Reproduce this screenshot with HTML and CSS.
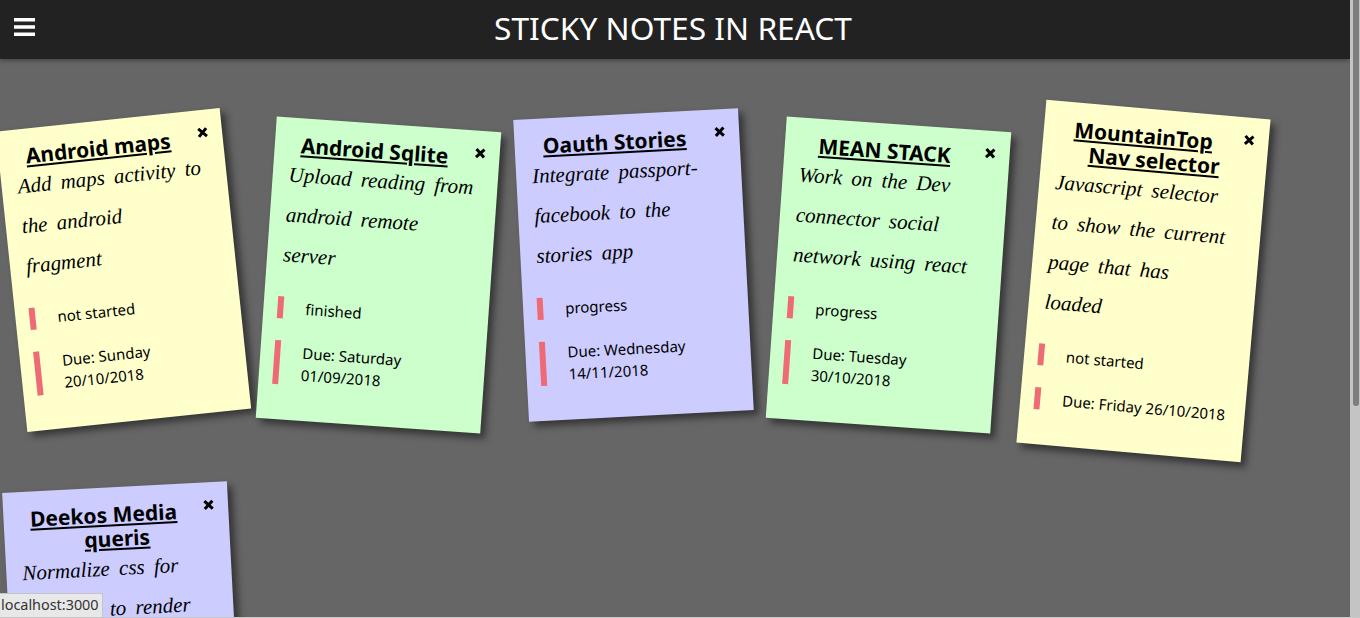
FILE: index.html
```html
<!DOCTYPE html>
<html lang="en">
<head>
    <meta charset="UTF-8">
    <title>Sticky Notes in React</title>
    <link rel="stylesheet" href="styles.css">
</head>
<body>
    <div class="page">
        <header class="topbar">
            <button class="menu" aria-label="Menu">
                <svg width="21" height="18" viewBox="0 0 21 18"><path d="M0 0h21v3.500H0zM0 7.200h21v3.500H0zM0 14.500h21V18H0z" fill="#fff"/></svg>
            </button>
            <h1>STICKY NOTES IN REACT</h1>
        </header>

        <ul class="notes">
            <li class="note yellow">
                <svg class="close" width="11" height="11" viewBox="0 0 11 11"><path d="M1.500 1.500l8 8M9.500 1.500l-8 8"/></svg>
                <h2>Android maps</h2>
                <p class="text">Add maps activity to<br>the android<br>fragment</p>
                <div class="meta">not started</div>
                <div class="meta">Due: Sunday<br>20/10/2018</div>
            </li>
            <li class="note green">
                <svg class="close" width="11" height="11" viewBox="0 0 11 11"><path d="M1.500 1.500l8 8M9.500 1.500l-8 8"/></svg>
                <h2>Android Sqlite</h2>
                <p class="text">Upload reading from<br>android remote<br>server</p>
                <div class="meta">finished</div>
                <div class="meta">Due: Saturday<br>01/09/2018</div>
            </li>
            <li class="note purple">
                <svg class="close" width="11" height="11" viewBox="0 0 11 11"><path d="M1.500 1.500l8 8M9.500 1.500l-8 8"/></svg>
                <h2>Oauth Stories</h2>
                <p class="text">Integrate passport-<br>facebook to the<br>stories app</p>
                <div class="meta">progress</div>
                <div class="meta">Due: Wednesday<br>14/11/2018</div>
            </li>
            <li class="note green">
                <svg class="close" width="11" height="11" viewBox="0 0 11 11"><path d="M1.500 1.500l8 8M9.500 1.500l-8 8"/></svg>
                <h2>MEAN STACK</h2>
                <p class="text">Work on the Dev<br>connector social<br>network using react</p>
                <div class="meta">progress</div>
                <div class="meta">Due: Tuesday<br>30/10/2018</div>
            </li>
            <li class="note yellow">
                <svg class="close" width="11" height="11" viewBox="0 0 11 11"><path d="M1.500 1.500l8 8M9.500 1.500l-8 8"/></svg>
                <h2>MountainTop Nav selector</h2>
                <p class="text">Javascript selector<br>to show the current<br>page that has<br>loaded</p>
                <div class="meta">not started</div>
                <div class="meta">Due: Friday 26/10/2018</div>
            </li>
            <li class="note purple tall">
                <svg class="close" width="11" height="11" viewBox="0 0 11 11"><path d="M1.500 1.500l8 8M9.500 1.500l-8 8"/></svg>
                <h2>Deekos Media queris</h2>
                <p class="text">Normalize css for<br>browsers to render</p>
            </li>
        </ul>

        <div class="status">localhost:3000</div>
    </div>
    <div class="scrollbar"><div class="thumb"></div></div>
</body>
</html>
```

FILE: styles.css
```css
* {
    box-sizing: border-box;
}

html, body {
    height: 100%;
}

body {
    margin: 0;
    display: flex;
    align-items: flex-start;
    overflow: hidden;
    background: #c8c8c8;
    font-family: "Noto Sans", "Open Sans", sans-serif;
    color: #000;
}

.page {
    position: relative;
    flex: 1;
    height: 617px;
    overflow: hidden;
    background: #666;
}

.topbar {
    display: flex;
    align-items: center;
    justify-content: center;
    height: 59px;
    background: #222;
    box-shadow: 0 2px 4px rgba(0, 0, 0, 0.3);
}

.topbar h1 {
    margin: 0 4px 5px 0;
    font-size: 31.7px;
    font-weight: 400;
    color: #fff;
}

.menu {
    position: absolute;
    left: 14px;
    top: 18px;
    display: flex;
    padding: 0;
    border: none;
    background: none;
}

.notes {
    display: flex;
    flex-wrap: wrap;
    align-items: flex-start;
    gap: 29px 30px;
    margin: 0;
    padding: 60px 0 0 11px;
    list-style: none;
}

.note {
    position: relative;
    width: 225px;
    padding: 15px 0 35px;
    box-shadow: 5px 5px 7px rgba(33, 33, 33, 0.7);
    transform: rotate(-6deg);
}

.note.tall {
    min-height: 344px;
}

.note:nth-child(even) {
    transform: translateY(5px) rotate(4deg);
}

.note:nth-child(3n) {
    transform: translateY(-5px) rotate(-3deg);
}

.note:nth-child(5n) {
    transform: translateY(-10px) rotate(5deg);
}

.yellow { background: #ffc; }
.green { background: #cfc; }
.purple { background: #ccf; }

/* floats so only the first title line is pushed left */
.close {
    float: right;
    margin: 2px 14px 0 10px;
    fill: none;
    stroke: #000;
    stroke-width: 3;
}

.note h2 {
    margin: 0;
    padding: 0 10px;
    font-size: 21px;
    line-height: 24px;
    font-weight: 700;
    text-align: center;
    text-decoration: underline;
}

/* no handwriting font here, serif italic is the closest */
.text {
    margin: -2px 0 22px 16px;
    font-family: "Liberation Serif", serif;
    font-style: italic;
    font-size: 21px;
    line-height: 40px;
    word-spacing: 4px;
    white-space: nowrap;
}

.meta {
    margin: 0 0 22px 14px;
    padding-left: 22px;
    border-left: 6px solid #ee6a75;
    font-size: 15px;
    line-height: 22px;
}

.meta:last-child {
    margin-bottom: 0;
}

.status {
    position: absolute;
    left: 0;
    bottom: 0;
    padding: 1px 3px 2px 1px;
    background: #e8e8e8;
    border: 1px solid #c4c4c4;
    border-left: none;
    border-bottom: none;
    font-size: 14.4px;
    line-height: 20px;
    color: #333;
}

.scrollbar {
    width: 10px;
    height: 617px;
    background: #c4c4c4;
}

.thumb {
    width: 6px;
    height: 406px;
    margin-left: 3px;
    border-radius: 0 0 3px 3px;
    background: #7d7d7d;
}
```
